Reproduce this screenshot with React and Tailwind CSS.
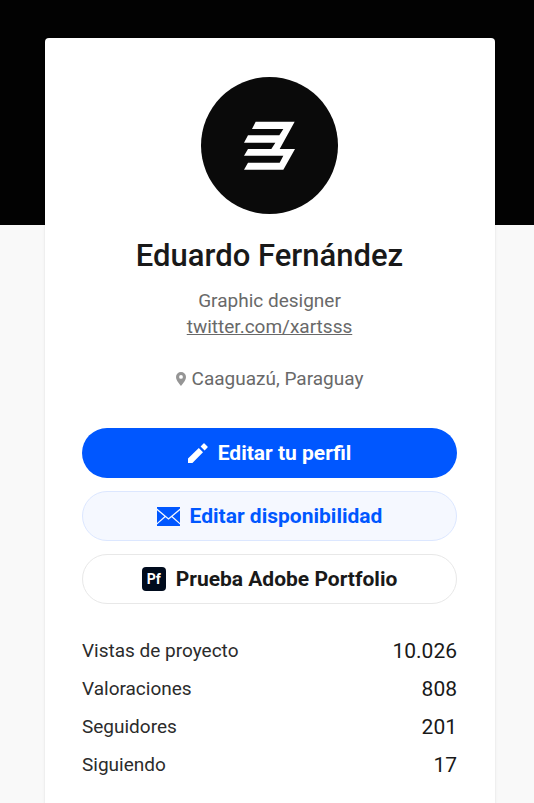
const stats = [
  { label: "Vistas de proyecto", value: "10.026" },
  { label: "Valoraciones", value: "808" },
  { label: "Seguidores", value: "201" },
  { label: "Siguiendo", value: "17" },
];

function Avatar() {
  return (
    <svg viewBox="0 0 411 411" className="h-[137px] w-[137px]" role="img" aria-label="Eduardo Fernández">
      <circle cx="205.5" cy="205.5" r="205.5" fill="#0a0a0a" />
      <path
        d="M164 134H281L236 216H282L247 278H129L141 257H236L247 236H129L141 216H211L223 197H129L141 175H235L247 156H153Z"
        fill="#fff"
      />
    </svg>
  );
}

function PencilIcon() {
  return (
    <svg viewBox="0 0 20 20" className="h-5 w-5 shrink-0" fill="currentColor" aria-hidden="true">
      <path d="M0 15.6L10.8 5L15 9.2L4.4 20H0ZM12.6 3.4L15.5 0.5Q16 0 16.5 0.5L19.5 3.5Q20 4 19.5 4.5L16.6 7.4Z" />
    </svg>
  );
}

function MailIcon() {
  return (
    <svg viewBox="0 0 23 19" className="h-[19px] w-[23px] shrink-0" aria-hidden="true">
      <path d="M0 0H23V19H0Z" fill="currentColor" />
      <path d="M-0.5 2L11.5 12L23.5 2M-0.5 17.2L8.2 9.4M23.5 17.2L14.8 9.4" fill="none" stroke="#f5f8ff" strokeWidth="1.3" />
    </svg>
  );
}

function PinIcon() {
  return (
    <svg viewBox="0 0 10 14" className="h-[14px] w-[10px] shrink-0" aria-hidden="true">
      <path
        d="M5 0A5 5 0 0 0 0 5C0 8.6 5 14 5 14S10 8.6 10 5A5 5 0 0 0 5 0ZM5 6.8A1.9 1.9 0 1 1 5 3A1.9 1.9 0 0 1 5 6.8Z"
        fill="#959595"
      />
    </svg>
  );
}

const buttonBase = "flex h-[50px] w-full items-center justify-center gap-2.5 rounded-full leading-6 font-bold";

export default function App() {
  return (
    <div className="min-h-screen bg-[#f9f9f9] font-['Roboto','Liberation_Sans',sans-serif] text-[#191919]">
      <header className="h-[225px] bg-[#020202]" />
      <main className="relative -mt-[187px] mr-[39px] ml-[45px] min-h-[calc(100vh-38px)] rounded-t bg-white pt-[39px] pr-[38px] pb-4 pl-[37px] shadow-sm">
        <section className="flex flex-col items-center text-center">
          <Avatar />
          <h1 className="mt-[22px] text-[31px] leading-10 font-medium">Eduardo Fernández</h1>
          <p className="mt-3 text-[19px] leading-[26px] text-[#696969]">Graphic designer</p>
          <a href="https://twitter.com/xartsss" className="text-[19px] leading-[26px] text-[#696969] underline">
            twitter.com/xartsss
          </a>
          <p className="mt-[26px] flex items-center gap-1.5 text-[19px] leading-[26px] text-[#696969]">
            <PinIcon />
            Caaguazú, Paraguay
          </p>
        </section>
        <div className="mt-9 flex flex-col gap-[13px]">
          <button type="button" className={`${buttonBase} bg-[#0057ff] text-[21px] text-white`}>
            <PencilIcon />
            Editar tu perfil
          </button>
          <button type="button" className={`${buttonBase} border border-[#dce7ff] bg-[#f5f8ff] text-[21px] text-[#0057ff]`}>
            <MailIcon />
            Editar disponibilidad
          </button>
          <button type="button" className={`${buttonBase} border border-[#e8e8e8] bg-white text-[21px]`}>
            <span className="flex h-6 w-6 items-center justify-center rounded bg-[#000b1d] text-sm leading-4 text-white">
              Pf
            </span>
            Prueba Adobe Portfolio
          </button>
        </div>
        <table className="mt-7 w-full">
          <tbody>
            {stats.map((stat) => (
              <tr key={stat.label} className="h-[38px]">
                <th scope="row" className="text-left text-[19px] leading-6 font-normal text-[#2b2b2b]">{stat.label}</th>
                <td className="text-right text-[21px] leading-6">{stat.value}</td>
              </tr>
            ))}
          </tbody>
        </table>
      </main>
    </div>
  );
}
